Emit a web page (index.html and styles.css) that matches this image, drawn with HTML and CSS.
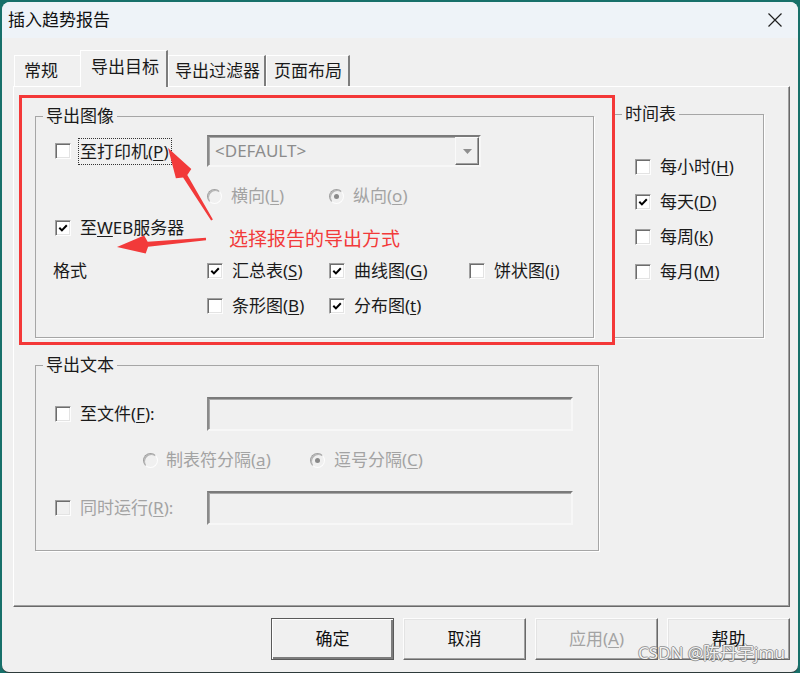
FILE: index.html
```html
<!DOCTYPE html>
<html lang="zh-CN">
<head>
<meta charset="utf-8">
<title>插入趋势报告</title>
<link rel="stylesheet" href="styles.css">
</head>
<body>
<div class="window">
  <div class="titlebar">
    <span class="title">插入趋势报告</span>
    <svg class="close" width="14" height="14" viewBox="0 0 14 14"><path d="M0.5 0.5 L13.5 13.5 M13.5 0.5 L0.5 13.5" stroke="#1f1f1f" stroke-width="1.2" fill="none"/></svg>
  </div>
  <div class="content">
    <div class="tabs">
      <div class="tab tab-1">常规</div>
      <div class="tab tab-2 tab-active">导出目标</div>
      <div class="tab tab-3">导出过滤器</div>
      <div class="tab tab-4">页面布局</div>
    </div>
    <div class="panel">
      <div class="top-row">
        <fieldset class="group group-image">
          <legend>导出图像</legend>
          <div class="image-body">
            <div class="grow row-1">
              <div class="chk"><span class="box"></span><span class="lbl focus">至打印机(<u>P</u>)</span></div>
              <div class="combo"><span class="combo-text">&lt;DEFAULT&gt;</span><span class="combo-btn"><svg width="9" height="5" viewBox="0 0 9 5"><path d="M0 0H9L4.5 5Z" fill="#8f8f8f"/></svg></span></div>
            </div>
            <div class="grow row-2">
              <div class="rad c2"><span class="radio"></span><span class="lbl dis">横向(<u>L</u>)</span></div>
              <div class="rad c3"><span class="radio on"></span><span class="lbl dis">纵向(<u>o</u>)</span></div>
            </div>
            <div class="grow row-3">
              <div class="chk"><span class="box"><svg width="12" height="12" viewBox="0 0 12 12"><path d="M2.3 5.8 L4.9 8.4 L9.8 3.2" stroke="#000" stroke-width="2" fill="none"/></svg></span><span class="lbl">至<u>W</u>EB服务器</span></div>
            </div>
            <div class="grow row-4">
              <div class="fmt">格式</div>
              <div class="chk c2"><span class="box"><svg width="12" height="12" viewBox="0 0 12 12"><path d="M2.3 5.8 L4.9 8.4 L9.8 3.2" stroke="#000" stroke-width="2" fill="none"/></svg></span><span class="lbl">汇总表(<u>S</u>)</span></div>
              <div class="chk c3"><span class="box"><svg width="12" height="12" viewBox="0 0 12 12"><path d="M2.3 5.8 L4.9 8.4 L9.8 3.2" stroke="#000" stroke-width="2" fill="none"/></svg></span><span class="lbl">曲线图(<u>G</u>)</span></div>
              <div class="chk c4"><span class="box"></span><span class="lbl">饼状图(<u>i</u>)</span></div>
            </div>
            <div class="grow row-5">
              <div class="chk c2"><span class="box"></span><span class="lbl">条形图(<u>B</u>)</span></div>
              <div class="chk c3"><span class="box"><svg width="12" height="12" viewBox="0 0 12 12"><path d="M2.3 5.8 L4.9 8.4 L9.8 3.2" stroke="#000" stroke-width="2" fill="none"/></svg></span><span class="lbl">分布图(<u>t</u>)</span></div>
            </div>
          </div>
        </fieldset>
        <fieldset class="group group-time">
          <legend>时间表</legend>
          <div class="time-body">
            <div class="chk"><span class="box"></span><span class="lbl">每小时(<u>H</u>)</span></div>
            <div class="chk"><span class="box"><svg width="12" height="12" viewBox="0 0 12 12"><path d="M2.3 5.8 L4.9 8.4 L9.8 3.2" stroke="#000" stroke-width="2" fill="none"/></svg></span><span class="lbl">每天(<u>D</u>)</span></div>
            <div class="chk"><span class="box"></span><span class="lbl">每周(<u>k</u>)</span></div>
            <div class="chk"><span class="box"></span><span class="lbl">每月(<u>M</u>)</span></div>
          </div>
        </fieldset>
      </div>
      <fieldset class="group group-text">
        <legend>导出文本</legend>
        <div class="text-body">
          <div class="trow row-a">
            <div class="chk"><span class="box"></span><span class="lbl">至文件(<u>F</u>):</span></div>
            <div class="field"></div>
          </div>
          <div class="rrow row-b">
            <div class="rad rad-tab"><span class="radio"></span><span class="lbl dis">制表符分隔(<u>a</u>)</span></div>
            <div class="rad"><span class="radio on"></span><span class="lbl dis">逗号分隔(<u>C</u>)</span></div>
          </div>
          <div class="trow row-c">
            <div class="chk"><span class="box box-dis"></span><span class="lbl dis">同时运行(<u>R</u>):</span></div>
            <div class="field"></div>
          </div>
        </div>
      </fieldset>
    </div>
    <div class="buttons">
      <div class="btn btn-default">确定</div>
      <div class="btn">取消</div>
      <div class="btn dis">应用(<u>A</u>)</div>
      <div class="btn">帮助</div>
    </div>
  </div>
</div>

<div class="mark-box"></div>
<svg class="arrows" width="800" height="673" viewBox="0 0 800 673">
  <polygon points="168,148 191.3,168.9 187.3,174.9 212.9,219.5 211.1,220.5 183.1,177.5 175.9,178.3" fill="#f23a3a"/>
  <polygon points="117,247 144.1,235.5 147.7,241.7 205.9,237.8 206.1,240.2 148.1,246.7 145.7,253.5" fill="#f23a3a"/>
</svg>
<div class="mark-text">选择报告的导出方式</div>
<div class="watermark">CSDN @陈丹宇jmu</div>
</body>
</html>
```

FILE: styles.css
```css
* { box-sizing: border-box; }
html, body { margin: 0; padding: 0; }
body {
  width: 800px;
  height: 673px;
  overflow: hidden;
  position: relative;
  background: #17706a;
  font-family: "Noto Sans", "Noto Sans CJK SC", sans-serif;
  font-size: 17px;
  color: #1a1a1a;
}
u { text-decoration: underline; text-underline-offset: 2px; text-decoration-thickness: 1px; }

.window {
  margin: 2px 2px 0 2px;
  height: 670px;
  background: #f0f0f0;
  border-radius: 8px 8px 7px 7px;
  overflow: hidden;
  box-shadow: 0 1px 0 #2d3a3a;
}
.titlebar {
  height: 36px;
  background: #eef3f8;
  display: flex;
  align-items: center;
  justify-content: space-between;
  padding: 0 16px 0 6px;
}
.title { line-height: 36px; color: #111; }
.close { display: block; }

.content { padding: 12px 8px 0 11px; }

.tabs {
  display: flex;
  align-items: flex-end;
  height: 36px;
  padding-left: 1px;
}
.tab {
  height: 31px;
  border-top: 1px solid #fff;
  border-left: 1px solid #fff;
  border-right: 2px solid #7d7d7d;
  line-height: 29px;
  white-space: nowrap;
  background: #f0f0f0;
}
.tab-1 { width: 66px; padding-left: 9px; border-right: none; }
.tab-2 { width: 88px; padding-left: 10px; }
.tab-3 { width: 98px; padding-left: 6px; }
.tab-4 { width: 84px; padding-left: 7px; }
.tab-active {
  height: 37px;
  line-height: 32px;
  margin-bottom: -1px;
  position: relative;
  z-index: 1;
}

.panel {
  width: 777px;
  height: 521px;
  border: 1px solid;
  border-color: #fff #696969 #696969 #fff;
  box-shadow: inset -1px -1px 0 #a0a0a0;
  padding: 17px 0 0 21px;
}
.top-row { display: flex; align-items: flex-start; }

.group {
  margin: 0;
  padding: 0;
  min-width: 0;
  border: 1px solid #a6a6a6;
  box-shadow: 1px 1px 0 #fff;
}
.group legend {
  font-size: 17px;
  line-height: 20px;
  padding: 0 3px;
  margin-left: 7px;
  color: #1a1a1a;
}
.group-image { width: 559px; height: 232px; margin-top: 2px; }
.group-time { width: 152px; height: 234px; margin-left: 18px; }
.group-time legend { margin-left: 9px; }
.group-text { width: 564px; height: 196px; margin-top: 17px; }

.image-body { padding: 9px 0 0 19px; }
.grow {
  display: grid;
  grid-template-columns: 152px 122px 140px 1fr;
  align-items: center;
  height: 24px;
}
.row-1 { height: 32px; }
.row-2 { margin-top: 17px; }
.row-3 { margin-top: 8px; }
.row-4 { margin-top: 19px; }
.row-5 { margin-top: 11px; }
.c2 { grid-column: 2; }
.c3 { grid-column: 3; }
.c4 { grid-column: 4; }
.fmt { margin-left: -2px; line-height: 24px; }

.chk, .rad {
  display: flex;
  align-items: center;
  gap: 9px;
  white-space: nowrap;
  line-height: 24px;
}
.lbl { line-height: 24px; }
.dis { color: #a3a3a3; }
.focus {
  border: 1px dotted #333;
  padding: 2px 2px 2px 1px;
  margin-left: -2px;
  line-height: 21px;
}
.box {
  flex: none;
  width: 16px;
  height: 16px;
  background: #fff;
  border: 1px solid;
  border-color: #a0a0a0 #fdfdfd #fdfdfd #a0a0a0;
  box-shadow: inset 1px 1px 0 #6d6d6d, inset -1px -1px 0 #e3e3e3;
  display: flex;
  align-items: center;
  justify-content: center;
}
.box svg { display: block; }
.box-dis { background: #f0f0f0; }
.radio {
  flex: none;
  width: 15px;
  height: 15px;
  border-radius: 50%;
  border: 1px solid;
  border-color: #a0a0a0 #fdfdfd #fdfdfd #a0a0a0;
  box-shadow: inset 1px 1px 0 #b4b4b4;
  background: #f0f0f0;
  display: flex;
  align-items: center;
  justify-content: center;
}
.radio.on::after {
  content: "";
  width: 5px;
  height: 5px;
  border-radius: 50%;
  background: #8a8a8a;
}

.combo {
  grid-column: 2 / 5;
  width: 274px;
  height: 32px;
  border: 2px solid;
  border-color: #7a7a7a #f7f7f7 #f7f7f7 #8a8a8a;
  box-shadow: inset 1px 1px 0 #a8a8a8;
  background: #f0f0f0;
  display: flex;
  align-items: center;
  justify-content: space-between;
}
.combo-text { color: #8c8c8c; padding-left: 6px; line-height: 24px; }
.combo-btn {
  width: 24px;
  height: 28px;
  border: 1px solid;
  border-color: #fafafa #696969 #696969 #fafafa;
  box-shadow: inset -1px -1px 0 #a0a0a0;
  display: flex;
  align-items: center;
  justify-content: center;
}
.combo-btn svg { display: block; }

.time-body {
  padding: 31px 0 0 22px;
  display: flex;
  flex-direction: column;
  gap: 11px;
}
.time-body .chk { height: 24px; }

.text-body { padding: 22px 0 0 19px; }
.trow {
  display: grid;
  grid-template-columns: 152px 1fr;
  align-items: center;
  height: 34px;
}
.rrow {
  display: flex;
  align-items: center;
  height: 24px;
  padding-left: 88px;
}
.row-b { margin-top: 17px; }
.row-c { margin-top: 19px; }
.rad-tab { width: 167px; gap: 8px; }
.field {
  width: 366px;
  height: 34px;
  border: 2px solid;
  border-color: #7a7a7a #f7f7f7 #f7f7f7 #8a8a8a;
  box-shadow: inset 1px 1px 0 #a8a8a8;
  background: #f0f0f0;
}

.buttons {
  display: flex;
  justify-content: flex-end;
  gap: 9px;
  margin-top: 11px;
}
.btn {
  width: 123px;
  height: 42px;
  border: 1px solid;
  border-color: #fcfcfc #696969 #696969 #fcfcfc;
  box-shadow: inset -1px -1px 0 #a0a0a0, inset 1px 1px 0 #e3e3e3;
  background: #f0f0f0;
  display: flex;
  align-items: center;
  justify-content: center;
  line-height: 24px;
  color: #111;
}
.btn-default {
  border: 1px solid #5a5a5a;
  box-shadow: inset 1px 1px 0 #fff, inset -2px -2px 0 #7d7d7d;
}
.btn.dis { color: #a3a3a3; }

.mark-box {
  position: absolute;
  left: 19px;
  top: 95px;
  width: 596px;
  height: 250px;
  border: 3px solid #f43838;
  pointer-events: none;
}
.arrows { position: absolute; left: 0; top: 0; pointer-events: none; }
.mark-text {
  position: absolute;
  left: 229px;
  top: 229px;
  font-size: 19px;
  line-height: 20px;
  color: #f23a3a;
  white-space: nowrap;
}
.watermark {
  position: absolute;
  left: 638px;
  top: 642px;
  font-size: 17px;
  line-height: 22px;
  color: #f2f2f2;
  white-space: nowrap;
  text-shadow: -1px 0 rgba(90,90,90,0.55), 1px 0 rgba(90,90,90,0.55), 0 1px rgba(90,90,90,0.55), 0 -1px rgba(90,90,90,0.55);
}
```
